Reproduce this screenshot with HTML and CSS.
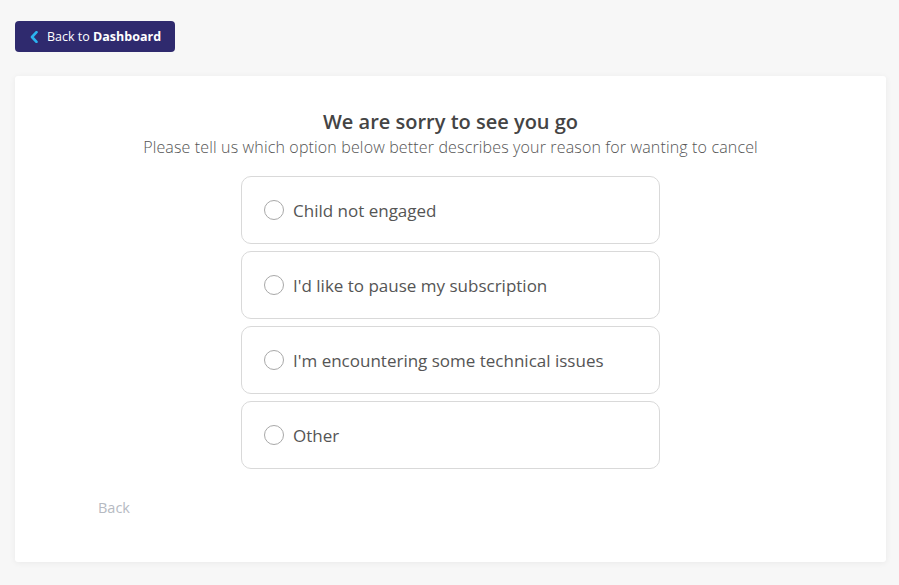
FILE: index.html
```html
<!DOCTYPE html>
<html>
<head>
<meta charset="utf-8">
<link rel="stylesheet" href="styles.css">
</head>
<body>
<div class="page">
  <a class="back-dash" href="#">
    <svg class="chev" width="8" height="12" viewBox="0 0 8 12"><path d="M6.5 1.2 L2 6 L6.5 10.8" fill="none" stroke="#2bb3f0" stroke-width="2.6" stroke-linecap="round" stroke-linejoin="round"/></svg>
    <span>Back to <b>Dashboard</b></span>
  </a>
  <div class="card">
    <h1 class="title">We are sorry to see you go</h1>
    <p class="subtitle">Please tell us which option below better describes your reason for wanting to cancel</p>
    <div class="options">
      <label class="option"><span class="radio"></span><span class="opt-text">Child not engaged</span></label>
      <label class="option"><span class="radio"></span><span class="opt-text">I'd like to pause my subscription</span></label>
      <label class="option"><span class="radio"></span><span class="opt-text">I'm encountering some technical issues</span></label>
      <label class="option"><span class="radio"></span><span class="opt-text">Other</span></label>
    </div>
    <div class="footer"><a class="back" href="#">Back</a></div>
  </div>
</div>
</body>
</html>
```
FILE: styles.css
```css
html, body { margin: 0; padding: 0; }
body {
  background: #f7f7f7;
  font-family: "Open Sans", "Noto Sans", sans-serif;
  color: #555;
  width: 899px;
  height: 585px;
  overflow: hidden;
}
.page { padding: 21px 13px 0 15px; }
.back-dash {
  display: inline-flex;
  align-items: center;
  gap: 9px;
  height: 31px;
  box-sizing: border-box;
  padding: 0 14px 0 15px;
  background: #2f2a6e;
  border-radius: 4px;
  color: #fff;
  text-decoration: none;
  font-size: 12.5px;
  white-space: nowrap;
}
.back-dash b { font-weight: 700; }
.chev { flex: none; }
.card {
  margin-top: 24px;
  background: #fff;
  border-radius: 3px;
  box-shadow: 0 1px 6px rgba(0,0,0,0.06);
  height: 486px;
  box-sizing: border-box;
  padding-top: 32px;
  display: flex;
  flex-direction: column;
  align-items: center;
}
.title {
  margin: 0;
  font-size: 20px;
  font-weight: 600;
  color: #444;
  line-height: 27px;
}
.subtitle {
  margin: 2px 0 0;
  font-size: 16px;
  font-weight: 300;
  color: #555;
  line-height: 21px;
  letter-spacing: 0.15px;
}
.options {
  margin-top: 18px;
  display: flex;
  flex-direction: column;
  gap: 7px;
  width: 419px;
}
.option {
  display: flex;
  align-items: center;
  height: 68px;
  box-sizing: border-box;
  border: 1px solid #d9d9d9;
  border-radius: 10px;
  padding-left: 22px;
  gap: 9px;
  cursor: pointer;
}
.radio {
  width: 20px;
  height: 20px;
  box-sizing: border-box;
  border: 1px solid #a8a8a8;
  border-radius: 50%;
  flex: none;
}
.opt-text { font-size: 17px; color: #555; }
.footer {
  align-self: stretch;
  padding: 27px 0 0 83px;
}
.back {
  color: #b6bac2;
  text-decoration: none;
  font-size: 14.5px;
}
```
